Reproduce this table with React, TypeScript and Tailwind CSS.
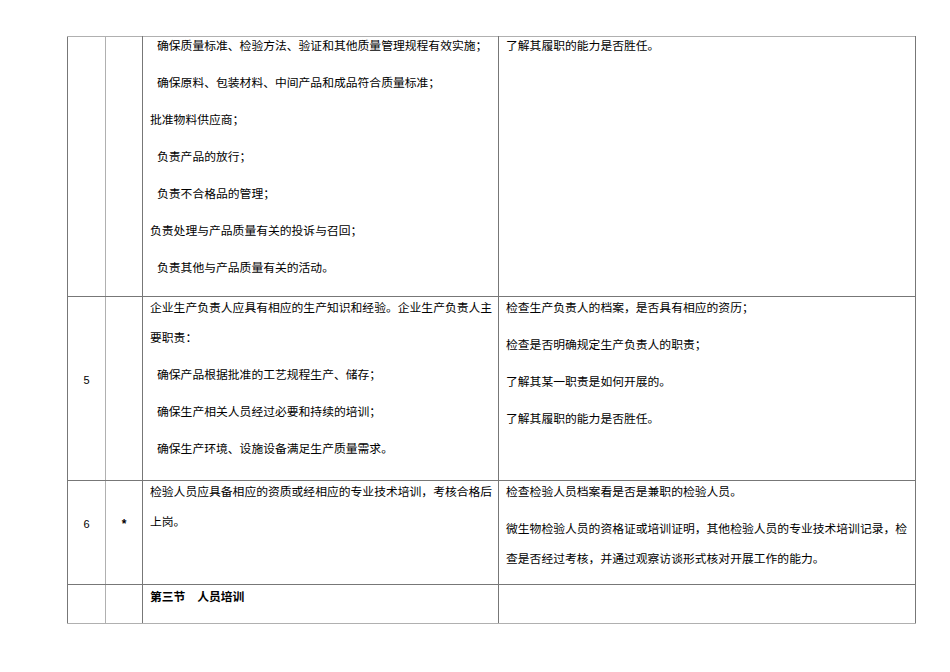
import React from "react";

const cjk = { fontFamily: '"Noto Sans CJK SC", "Noto Sans", sans-serif' };

const dark = "border-[#777777]";

const Para = ({ children, indent = false, bold = false }: { children: React.ReactNode; indent?: boolean; bold?: boolean }) => (
  <p className={`mb-[7px] leading-[30px] ${indent ? "pl-[7px]" : ""} ${bold ? "font-bold" : ""}`}>{children}</p>
);

const App = () => {
  return (
    <div className="w-[950px] h-[672px] bg-white pt-[36px] pl-[67px]" style={cjk}>
      <table className="border-collapse table-fixed text-[11.8px] text-black">
        <colgroup>
          <col className="w-[38px]" />
          <col className="w-[37px]" />
          <col className="w-[356px]" />
          <col className="w-[417px]" />
        </colgroup>
        <tbody>
          <tr className="h-[260px]">
            <td className={`border-l border-r border-t border-l-[#777777] border-r-[#b0b0b0] border-t-[#b0b0b0] border-b ${dark}`}></td>
            <td className={`border-r border-t border-r-[#777777] border-t-[#b0b0b0] border-b ${dark}`}></td>
            <td className={`border-t border-t-[#b0b0b0] border-r border-b ${dark} align-top pl-[7px] pr-[2px]`}>
              <div className="-mt-[7px]">
                <Para indent>确保质量标准、检验方法、验证和其他质量管理规程有效实施；</Para>
                <Para indent>确保原料、包装材料、中间产品和成品符合质量标准；</Para>
                <Para>批准物料供应商；</Para>
                <Para indent>负责产品的放行；</Para>
                <Para indent>负责不合格品的管理；</Para>
                <Para>负责处理与产品质量有关的投诉与召回；</Para>
                <Para indent>负责其他与产品质量有关的活动。</Para>
              </div>
            </td>
            <td className={`border-t border-t-[#b0b0b0] border-r border-b ${dark} align-top pl-[7px] pr-[2px]`}>
              <div className="-mt-[7px]">
                <Para>了解其履职的能力是否胜任。</Para>
              </div>
            </td>
          </tr>
          <tr className="h-[184px]">
            <td className={`border-l border-r border-b border-l-[#777777] border-r-[#b0b0b0] ${dark} text-center align-middle pb-[18px]`}>
              <span className="text-[11px]" style={{ fontFamily: '"Liberation Sans", sans-serif' }}>5</span>
            </td>
            <td className={`border-r border-b ${dark}`}></td>
            <td className={`border-r border-b ${dark} align-top pl-[7px] pr-[2px]`}>
              <div className="-mt-[5px]">
                <Para>企业生产负责人应具有相应的生产知识和经验。企业生产负责人主要职责：</Para>
                <Para indent>确保产品根据批准的工艺规程生产、储存；</Para>
                <Para indent>确保生产相关人员经过必要和持续的培训；</Para>
                <Para indent>确保生产环境、设施设备满足生产质量需求。</Para>
              </div>
            </td>
            <td className={`border-r border-b ${dark} align-top pl-[7px] pr-[2px]`}>
              <div className="-mt-[5px]">
                <Para>检查生产负责人的档案，是否具有相应的资历；</Para>
                <Para>检查是否明确规定生产负责人的职责；</Para>
                <Para>了解其某一职责是如何开展的。</Para>
                <Para>了解其履职的能力是否胜任。</Para>
              </div>
            </td>
          </tr>
          <tr className="h-[104px]">
            <td className={`border-l border-r border-b border-l-[#777777] border-r-[#b0b0b0] ${dark} text-center align-middle pb-[18px]`}>
              <span className="text-[11px]" style={{ fontFamily: '"Liberation Sans", sans-serif' }}>6</span>
            </td>
            <td className={`border-r border-b ${dark} text-center align-middle pb-[18px]`}>
              <span className="text-[12px] font-bold" style={{ fontFamily: '"Liberation Sans", sans-serif' }}>*</span>
            </td>
            <td className={`border-r border-b ${dark} align-top pl-[7px] pr-[2px]`}>
              <div className="-mt-[5px]">
                <Para>检验人员应具备相应的资质或经相应的专业技术培训，考核合格后上岗。</Para>
              </div>
            </td>
            <td className={`border-r border-b ${dark} align-top pl-[7px] pr-[2px]`}>
              <div className="-mt-[5px]">
                <Para>检查检验人员档案看是否是兼职的检验人员。</Para>
                <Para>微生物检验人员的资格证或培训证明，其他检验人员的专业技术培训记录，检查是否经过考核，并通过观察访谈形式核对开展工作的能力。</Para>
              </div>
            </td>
          </tr>
          <tr className="h-[39px]">
            <td className={`border-l border-r border-b border-l-[#777777] border-r-[#b0b0b0] border-b-[#b0b0b0]`}></td>
            <td className={`border-r border-b border-r-[#777777] border-b-[#b0b0b0]`}></td>
            <td className={`border-r border-b border-r-[#777777] border-b-[#b0b0b0] align-top pl-[7px] pr-[2px]`}>
              <div className="-mt-[4px]">
                <p className="leading-[30px] font-bold whitespace-pre">第三节　人员培训</p>
              </div>
            </td>
            <td className={`border-r border-b border-r-[#777777] border-b-[#b0b0b0]`}></td>
          </tr>
        </tbody>
      </table>
    </div>
  );
};

export default App;
